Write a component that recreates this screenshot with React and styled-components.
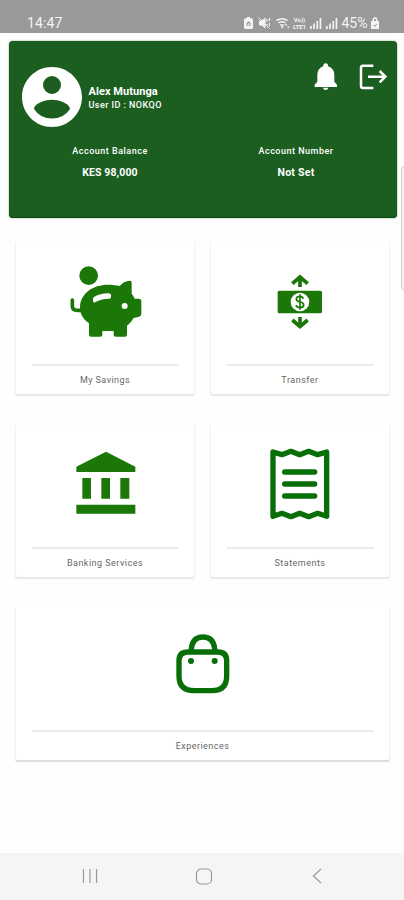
import React from "react";
import styled, { createGlobalStyle } from "styled-components";

const GlobalStyle = createGlobalStyle`
  * { box-sizing: border-box; }
  body { margin: 0; background: #fefefe; font-family: Roboto, sans-serif; }
  svg { display: block; flex: none; }
`;

const Screen = styled.div`
  position: relative;
  width: 404px;
  height: 900px;
  display: flex;
  flex-direction: column;
  overflow: hidden;
  background: #fefefe;
`;

const StatusBar = styled.header`
  height: 33px;
  flex: none;
  display: flex;
  justify-content: space-between;
  padding: 13px 25px 0 27px;
  background: #999;
  color: #f4f4f4;
`;

const Clock = styled.time`
  font-size: 14px;
  line-height: 20px;
  letter-spacing: 0.1px;
`;

const StatusIcons = styled.div`
  display: flex;
  align-items: center;
  height: 20px;
`;

const StatusGlyph = styled.svg`
  fill: #f4f4f4;
  stroke: none;
  margin-right: ${(p) => p.$gap || 0}px;
`;

const Volte = styled.span`
  display: flex;
  flex-direction: column;
  width: 16px;
  margin-right: 2px;
  font-size: 6px;
  font-weight: 700;
  line-height: 7px;
  text-align: center;
  white-space: nowrap;
`;

const Percent = styled.span`
  width: 29.5px;
  font-size: 14px;
  line-height: 20px;
`;

const AccountCard = styled.section`
  width: 388px;
  height: 177px;
  margin: 8px 0 0 9px;
  flex: none;
  border-radius: 4px;
  background: #1b5e1f;
  color: #fff;
  box-shadow: 0 0 2px rgba(20, 60, 20, 0.5), inset 0 -1px 1px #0d4d12;
`;

const ProfileRow = styled.div`
  display: flex;
  height: 103px;
  padding: 26px 10px 0 12.5px;
`;

const Profile = styled.div`
  margin: 17.5px 0 0 7px;
  flex: 1;
`;

const Label = styled.div`
  font-size: ${(p) => p.$size}px;
  font-weight: ${(p) => p.$weight || 400};
  line-height: ${(p) => p.$line || 14}px;
  letter-spacing: ${(p) => p.$track || 0}px;
  white-space: nowrap;
`;

const Actions = styled.div`
  display: flex;
  gap: 21px;
  margin-top: -4px;
`;

const Facts = styled.div`
  display: grid;
  grid-template-columns: 1fr 1fr;
  padding: 0 8px;
`;

const Fact = styled.div`
  display: flex;
  flex-direction: column;
  align-items: center;
  gap: 8px;
`;

const Tiles = styled.main`
  display: grid;
  grid-template-columns: 180px 180px;
  grid-auto-rows: 152px;
  gap: 31px 15px;
  padding: 24px 0 0 15px;
  flex: 1;
`;

const Tile = styled.article`
  grid-column: ${(p) => (p.$wide ? "1 / -1" : "auto")};
  display: flex;
  flex-direction: column;
  padding: 0 15px 0 16px;
  background: #fff;
  border-radius: 0 0 3px 3px;
  border: solid #f2f2f2;
  border-width: 0 1px;
  box-shadow: 0 2px 1px ${(p) => (p.$wide ? "#ddd" : "#e8e8e8")};
`;

const TileIcon = styled.div`
  height: 124px;
  display: flex;
  justify-content: center;
  padding-top: ${(p) => p.$top}px;
  padding-right: ${(p) => p.$inset || 0}px;
  border-bottom: 2px solid #ececec;
`;

const TileLabel = styled.div`
  display: flex;
  justify-content: center;
  padding: 7px 1px 0 0;
  color: #666;
`;

const NavBar = styled.nav`
  height: 47px;
  flex: none;
  display: grid;
  grid-template-columns: 112.5px 117px auto;
  padding: 15px 81px 0 82px;
  background: #f5f5f5;
`;

const NavGlyph = styled.svg`
  fill: none;
  stroke: #999;
  stroke-width: 1.2;
`;

const EdgeHandle = styled.div`
  position: absolute;
  left: 401px;
  top: 166px;
  width: 8px;
  height: 125px;
  border: 1.5px solid #ccc;
  border-radius: 5px;
  background: #f5f5f5;
`;

const GREEN = "#1b7708";

const Battery = () => (
  <StatusGlyph width="9" height="12" viewBox="0 0 9 12" $gap={5}>
    <path fillRule="evenodd" d="M3 0h3v1.2h1.5Q9 1.5 9 3v7.5Q9 12 7.5 12h-6Q0 12 0 10.500V3Q0 1.500 1.500 1.200H3zM4.500 4 2.500 6.300v2.500h4V6.300z" />
    <circle cx="4.500" cy="7.200" r="1" />
  </StatusGlyph>
);

const Mute = () => (
  <StatusGlyph width="13" height="12" viewBox="0 0 13 12" $gap={5}>
    <path d="M1 3.500h2.500L7.500.5v11l-4-3H1z" />
    <path d="m.5.5 11 11" stroke="#f4f4f4" />
    <path d="M9 2v3M11.500 1v3M9 7v1.500M11.500 6v3" stroke="#f4f4f4" strokeWidth="1.200" />
  </StatusGlyph>
);

const Wifi = () => (
  <StatusGlyph width="14" height="12" viewBox="0 0 14 12" $gap={2}>
    <path d="M.5 3.500Q6 0 11.500 3.500M2.500 6Q6 3.500 9.500 6M4.200 8.300Q6 7 7.800 8.300" stroke="#f4f4f4" strokeWidth="1.500" fill="none" />
    <circle cx="6.200" cy="10.200" r="1.100" />
    <path d="m8.500 8.500 1.500-2 1.500 2zM11 9.500l1.300 2 1.500-2z" />
  </StatusGlyph>
);

const Signal = ({ gap }) => (
  <StatusGlyph width="12" height="12" viewBox="0 0 12 12" $gap={gap}>
    <path d="M0 9h1.700v3H0zM3.200 6.500h1.700V12H3.200zM6.400 4h1.700v8H6.400zM9.600 1h1.700v11H9.600z" />
  </StatusGlyph>
);

const ChargingBattery = () => (
  <StatusGlyph width="8" height="12" viewBox="0 0 8 12">
    <path fillRule="evenodd" d="M1.500 4V2.500Q2 0 4 0t2.500 2.500V4H8v8H0V4zM3 4h2V2.500Q4 1 3 2.500z" />
    <path d="m2.500 8 1.300 1.500 2-2.700" stroke="#999" fill="none" />
  </StatusGlyph>
);

const Avatar = () => (
  <svg width="60" height="60" viewBox="2 2 20 20" fill="#fff">
    <path d="M12 2C6.480 2 2 6.480 2 12s4.480 10 10 10 10-4.480 10-10S17.520 2 12 2zm0 3a3 3 0 1 1 0 6 3 3 0 0 1 0-6zm0 14.200a7.200 7.200 0 0 1-6-3.220c.03-1.990 4-3.080 6-3.080s5.970 1.090 6 3.080a7.200 7.200 0 0 1-6 3.220z" />
  </svg>
);

const Bell = () => (
  <svg width="24" height="28" viewBox="338 190 72 84" fill="#fff">
    <path d="M366 197q0-6 7-6t7 6v3q19 6 19 26v20l8 9v7h-67v-7l8-9v-20q0-20 18-26zM365 264h16q-1 7-8 7t-8-7z" />
  </svg>
);

const Logout = () => (
  <svg width="28" height="28" viewBox="471 190 84 84" fill="none" stroke="#fff" strokeWidth="7.500">
    <path d="M514 198h-31q-6 0-6 6v55q0 6 6 6h31M498 231h50" />
    <path d="m533 214 17 17-17 17" />
  </svg>
);

const Piggy = () => (
  <svg width="72" height="72" viewBox="210 105 216 216" fill={GREEN}>
    <path d="M217 210v17q0 14 16 14h12" fill="none" stroke={GREEN} strokeWidth="11" strokeLinecap="round" />
    <path fillRule="evenodd" d="M240 229c3-39 38-65 84-65 13 0 25 2 35 4 8-9 18-16 31-16q5 0 5 5v34q6 7 9 15h12q8 0 8 8v37q0 7-7 9l-16 4q-8 15-20 23v27q0 6-6 6h-28q-6 0-6-6v-11h-34v11q0 6-6 6h-28q-6 0-6-6v-34c-19-13-28-30-27-51zM282 218q24-13 47-12 4-2 4-6v-5q-1-5-7-5-23-1-44 11-4 3-3 8 0 7 3 9zM374 219a9 9 0 1 0 0 18 9 9 0 0 0 0-18z" />
    <circle cx="266" cy="137" r="31.500" stroke="#fff" strokeWidth="7" />
  </svg>
);

const Transfer = () => (
  <svg width="46" height="56" viewBox="225 131 138 168" fill="none" stroke={GREEN} strokeWidth="9">
    <path d="M294 170v-29M271 160l23-20 23 20M294 260v29M271 269l23 20 23-20" strokeWidth="11" />
    <rect x="227" y="181" width="133" height="68" rx="5" fill={GREEN} stroke="none" />
    <circle cx="294" cy="215" r="28" fill="#fff" stroke="none" />
    <path d="M304 205q-2-7-11-7-10 0-10 8 0 7 11 9t11 9q0 8-11 8-10 0-12-8M294 192v46" strokeWidth="5" />
  </svg>
);

const Bank = () => (
  <svg width="60" height="64" viewBox="227 123 180 192" fill={GREEN}>
    <path d="m317 125 88 45v16H228v-16zM246 204h26v62h-26zM303 204h26v62h-26zM360 204h27v62h-27zM228 284h177v27H228z" />
  </svg>
);

const Receipt = () => (
  <svg width="60" height="72" viewBox="204 114 180 216" fill="none" stroke="#086f08" strokeWidth="16" strokeLinecap="round" strokeLinejoin="round">
    <path d="M213 126l27 8 27-10 26 10 27-10 27 10 27-8v193l-27-9-27 10-27-10-26 10-27-10-27 9z" />
    <path d="M248 186h90M248 222h90M248 258h90" />
  </svg>
);

const Bag = () => (
  <svg width="54" height="60" viewBox="227 101 162 180" fill="none" stroke="#086f08" strokeWidth="16">
    <path d="M263 155h90q26 0 26 26v46q0 44-44 44h-53q-46 0-46-44v-46q0-26 27-26zM273 155v-10q4-35 35-35t35 35v10" />
    <g fill="#086f08" stroke="none"><circle cx="272" cy="182" r="9" /><circle cx="343" cy="182" r="9" /></g>
  </svg>
);

const tiles = [
  { label: "My Savings", icon: <Piggy />, top: 23, track: 0.45 },
  { label: "Transfer", icon: <Transfer />, top: 32, inset: 2, track: 0.5 },
  { label: "Banking Services", icon: <Bank />, top: 26, track: 0.48 },
  { label: "Statements", icon: <Receipt />, top: 23, inset: 2, track: 0.48 },
  { label: "Experiences", icon: <Bag />, top: 26, inset: 1, track: 0.45, wide: true },
];

export default function App() {
  return (
    <Screen>
      <GlobalStyle />
      <StatusBar>
        <Clock>14:47</Clock>
        <StatusIcons>
          <Battery />
          <Mute />
          <Wifi />
          <Volte><span>Vo))</span><span>LTE1</span></Volte>
          <Signal gap={4} />
          <Signal gap={4} />
          <Percent>45%</Percent>
          <ChargingBattery />
        </StatusIcons>
      </StatusBar>
      <AccountCard>
        <ProfileRow>
          <Avatar />
          <Profile>
            <Label $size={11} $weight={700} $track={0.05} $line={13}>Alex Mutunga</Label>
            <Label $size={9} $weight={500} $track={0.45} $line={14}>User ID : NOKQO</Label>
          </Profile>
          <Actions>
            <Bell />
            <Logout />
          </Actions>
        </ProfileRow>
        <Facts>
          <Fact>
            <Label $size={9} $weight={500} $track={0.5}>Account Balance</Label>
            <Label $size={10.5} $weight={700} $track={0.1}>KES 98,000</Label>
          </Fact>
          <Fact>
            <Label $size={9} $weight={500} $track={0.5}>Account Number</Label>
            <Label $size={10.5} $weight={700} $track={0.25}>Not Set</Label>
          </Fact>
        </Facts>
      </AccountCard>
      <Tiles>
        {tiles.map((t) => (
          <Tile key={t.label} $wide={t.wide}>
            <TileIcon $top={t.top} $inset={t.inset}>{t.icon}</TileIcon>
            <TileLabel>
              <Label $size={9} $track={t.track}>{t.label}</Label>
            </TileLabel>
          </Tile>
        ))}
      </Tiles>
      <NavBar>
        <NavGlyph width="16" height="16" viewBox="0 0 16 16"><path d="M1.500 1v14M8 1v14M14.500 1v14" /></NavGlyph>
        <NavGlyph width="18" height="18" viewBox="0 0 18 18"><rect x="1.500" y="1" width="15" height="15" rx="4.500" /></NavGlyph>
        <NavGlyph width="10" height="16" viewBox="0 0 10 16"><path d="M9 1 1.500 8 9 15" /></NavGlyph>
      </NavBar>
      <EdgeHandle />
    </Screen>
  );
}
